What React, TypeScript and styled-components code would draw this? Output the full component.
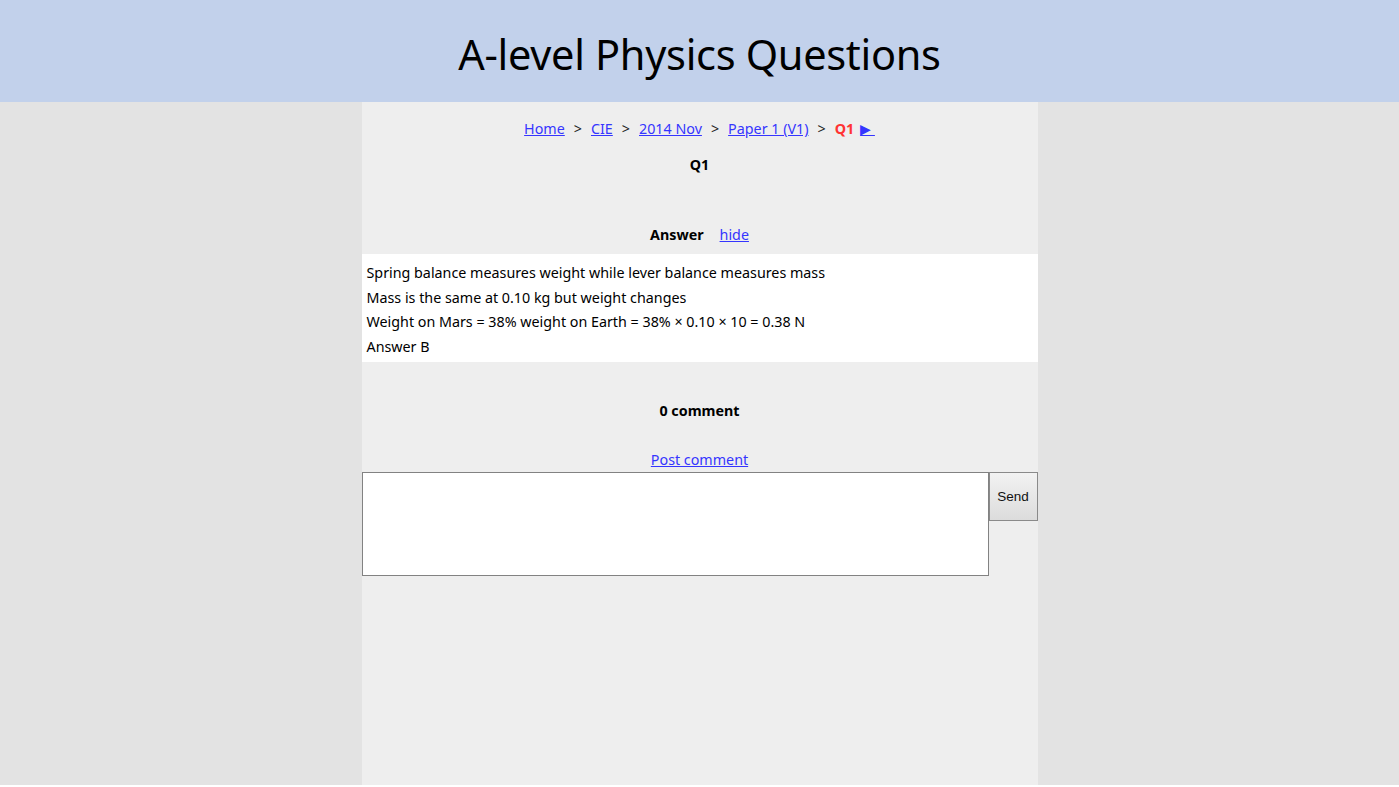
import React from "react";
import styled, { createGlobalStyle } from "styled-components";

const GlobalStyle = createGlobalStyle`
  html, body {
    margin: 0;
    padding: 0;
    background: #fff;
    font-family: "Noto Sans", "Open Sans", sans-serif;
    color: #000;
  }
`;

const Page = styled.div`
  min-height: 785px;
  background: #e3e3e3;
  display: flex;
  flex-direction: column;
`;

const Header = styled.header`
  height: 102px;
  box-sizing: border-box;
  padding-top: 6px;
  background: #c2d1eb;
  display: flex;
  align-items: center;
  justify-content: center;
`;

const SiteTitle = styled.h1`
  margin: 0;
  font-size: 41.5px;
  font-weight: 400;
  letter-spacing: -0.3px;
  color: #000;
`;

const Column = styled.main`
  width: 676px;
  margin: 0 auto;
  flex: 1;
  background: #eeeeee;
  display: flex;
  flex-direction: column;
  font-size: 14.3px;
`;

const Crumbs = styled.nav`
  margin-top: 17px;
  height: 20px;
  line-height: 20px;
  text-align: center;
`;

const Link = styled.a`
  color: #3535ff;
  text-decoration: underline;
  cursor: pointer;
`;

const Sep = styled.span`
  margin: 0 9px;
  color: #222;
`;

const Current = styled.span`
  color: #ff3333;
  font-weight: 700;
  margin-right: 6px;
`;

const Heading = styled.div<{ $top: number }>`
  margin-top: ${(p) => p.$top}px;
  height: 20px;
  line-height: 20px;
  text-align: center;
  font-weight: 700;
`;

const HideLink = styled(Link)`
  font-weight: 400;
  margin-left: 16px;
`;

const AnswerBox = styled.div`
  margin-top: 9px;
  background: #fff;
  padding: 7px 5px 3px;
  line-height: 24.5px;
`;

const PostRow = styled.div`
  margin-top: 31px;
  height: 16px;
  line-height: 16px;
  text-align: center;
`;

const Form = styled.div`
  margin-top: 4px;
  display: flex;
  align-items: flex-start;
`;

const TextArea = styled.textarea`
  width: 627px;
  height: 104px;
  box-sizing: border-box;
  border: 1px solid #828282;
  margin: 0;
  padding: 2px;
  resize: none;
  background: #fff;
  font-family: "Noto Sans", sans-serif;
`;

const SendButton = styled.button`
  width: 49px;
  height: 49px;
  box-sizing: border-box;
  border: 1px solid #8a8a8a;
  margin: 0;
  background: linear-gradient(#f2f2f2, #dcdcdc);
  font-family: "Liberation Sans", Arial, sans-serif;
  font-size: 13.5px;
  color: #111;
`;

export default function App() {
  const lines = [
    "Spring balance measures weight while lever balance measures mass",
    "Mass is the same at 0.10 kg but weight changes",
    "Weight on Mars = 38% weight on Earth = 38% × 0.10 × 10 = 0.38 N",
    "Answer B",
  ];

  return (
    <Page>
      <GlobalStyle />
      <Header>
        <SiteTitle>A-level Physics Questions</SiteTitle>
      </Header>
      <Column>
        <Crumbs>
          <Link>Home</Link>
          <Sep>&gt;</Sep>
          <Link>CIE</Link>
          <Sep>&gt;</Sep>
          <Link>2014 Nov</Link>
          <Sep>&gt;</Sep>
          <Link>Paper 1 (V1)</Link>
          <Sep>&gt;</Sep>
          <Current>Q1</Current>
          <Link>&#9654;&nbsp;</Link>
        </Crumbs>
        <Heading $top={16}>Q1</Heading>
        <Heading $top={50}>
          Answer<HideLink>hide</HideLink>
        </Heading>
        <AnswerBox>
          {lines.map((l, i) => (
            <div key={i}>{l}</div>
          ))}
        </AnswerBox>
        <Heading $top={39}>0 comment</Heading>
        <PostRow>
          <Link>Post comment</Link>
        </PostRow>
        <Form>
          <TextArea />
          <SendButton>Send</SendButton>
        </Form>
      </Column>
    </Page>
  );
}
